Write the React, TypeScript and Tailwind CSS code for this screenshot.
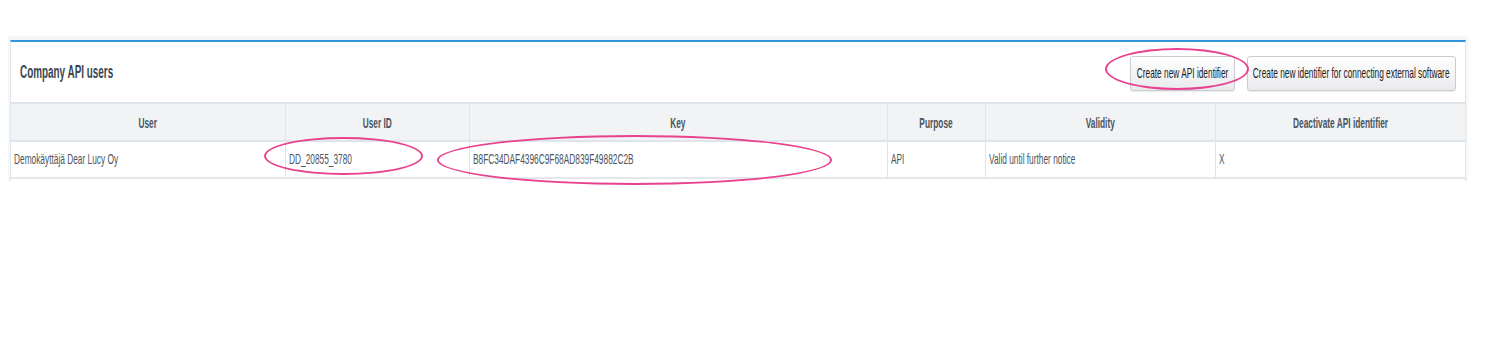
const columns = [
  { label: 'User', width: 'w-[274px]' },
  { label: 'User ID', width: 'w-[184px]' },
  { label: 'Key', width: 'w-[418px]' },
  { label: 'Purpose', width: 'w-[98px]' },
  { label: 'Validity', width: 'w-[230px]' },
  { label: 'Deactivate API identifier', width: '' },
]

const row = [
  'Demokäyttäjä Dear Lucy Oy',
  'DD_20855_3780',
  'B8FC34DAF4396C9F68AD839F49882C2B',
  'API',
  'Valid until further notice',
  'X',
]

// the screenshot's font is a condensed face, so squeeze the text horizontally
function Narrow({ children, center }: { children: React.ReactNode; center?: boolean }) {
  return (
    <span
      className={`inline-block whitespace-nowrap scale-x-[0.555] ${center ? 'origin-center' : 'origin-left'}`}
    >
      {children}
    </span>
  )
}

function Highlight({ className }: { className: string }) {
  // hand-drawn marker ellipse over the screenshot
  return (
    <div
      className={`pointer-events-none absolute rounded-[50%] border-2 border-[#e8418f] ${className}`}
    />
  )
}

export default function App() {
  return (
    <div className="h-[364px] bg-white pt-[36px] px-[8px] font-['Liberation_Sans',Arial,sans-serif] text-[#4b5560]">
      <div className="relative w-[1460px] bg-[#f4f6f8] pt-[4px] px-[2px]">
        <div className="border-t-2 border-[#2f97dc] border-x border-x-[#dfe6ed] bg-white">
          {/* Header */}
          <div className="flex h-[60px] items-center justify-between pl-[9px] pr-[9px]">
            <h2 className="text-[18px] font-bold leading-none text-[#3a4652]">
              <span className="inline-block whitespace-nowrap origin-left scale-x-[0.55]">Company API users</span>
            </h2>
            <div className="flex items-center gap-[12px] pt-[2px]">
              <button className="flex h-[35px] w-[105px] items-center justify-center rounded-[3px] border border-[#c9cdd1] bg-gradient-to-b from-white to-[#e9eaec] text-[15px] text-[#222] shadow-[0_1px_1px_rgba(0,0,0,0.08)]">
                <Narrow center>Create new API identifier</Narrow>
              </button>
              <button className="flex h-[35px] w-[209px] items-center justify-center rounded-[3px] border border-[#c9cdd1] bg-gradient-to-b from-white to-[#e9eaec] text-[15px] text-[#222] shadow-[0_1px_1px_rgba(0,0,0,0.08)]">
                <Narrow center>Create new identifier for connecting external software</Narrow>
              </button>
            </div>
          </div>

          {/* Table */}
          <table className="w-full border-collapse text-[15px] leading-none">
            <thead>
              <tr className="h-[38px] bg-[#f2f3f5]">
                {columns.map(c => (
                  <th
                    key={c.label}
                    className={`${c.width} border-y-2 border-[#dfe5eb] border-l border-l-[#dde4ea] first:border-l-0 text-center font-bold text-[#4a5561]`}
                  >
                    <Narrow center>{c.label}</Narrow>
                  </th>
                ))}
              </tr>
            </thead>
            <tbody>
              <tr className="h-[37px]">
                {row.map((v, i) => (
                  <td
                    key={i}
                    className="border-b-2 border-[#e4e8ec] border-l border-l-[#dde4ea] first:border-l-0 px-[3px] pb-[2px] text-left text-[#4b5560]"
                  >
                    <Narrow>{v}</Narrow>
                  </td>
                ))}
              </tr>
            </tbody>
          </table>
          <div className="h-[2px]" />
        </div>

        <Highlight className="left-[1097px] top-[12px] h-[42px] w-[144px]" />
        <Highlight className="left-[256px] top-[101px] h-[38px] w-[159px]" />
        <Highlight className="left-[429px] top-[99px] h-[50px] w-[395px]" />
      </div>
    </div>
  )
}
